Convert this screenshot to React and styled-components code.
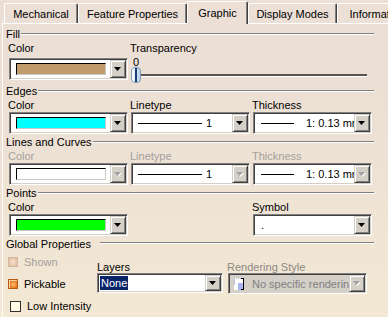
import React from "react";
import styled, { createGlobalStyle, css } from "styled-components";

const GlobalStyle = createGlobalStyle`
  html, body { margin: 0; padding: 0; }
  body {
    width: 388px;
    height: 317px;
    overflow: hidden;
    background: linear-gradient(180deg, #ebdfd6 0%, #ede1d5 45%, #f3e8d3 100%);
    font-family: "Liberation Sans", Arial, sans-serif;
    font-size: 11px;
    color: #000;
  }
`;

// Tabs
const TabBar = styled.div`
  display: flex;
  align-items: flex-end;
  height: 23px;
  padding-left: 4px;
`;

const Tab = styled.div`
  box-sizing: border-box;
  flex: none;
  width: ${(p) => p.$w}px;
  height: 20px;
  display: flex;
  align-items: center;
  justify-content: center;
  white-space: nowrap;
  overflow: hidden;
  border-top: 1px solid #fff;
  border-left: 1px solid #fff;
  border-right: 1px solid #404040;
  box-shadow: inset -1px 0 #808080;
  border-radius: 2px 2px 0 0;
  background: #ebdfd6;

  ${(p) =>
    p.$active &&
    css`
      height: 23px;
      margin-bottom: -1px;
      padding-bottom: 1px;
      position: relative;
      z-index: 1;
    `}
`;

// Panel
const Panel = styled.div`
  margin-left: 2px;
  border-top: 1px solid #fff;
  border-left: 1px solid #fff;
  padding: 4px 0 0 3px;
`;

const Section = styled.div`
  margin-bottom: 2px;
`;

const SectionTitle = styled.div`
  display: flex;
  align-items: center;
  width: 368px;
  height: 12px;
  line-height: 12px;
  white-space: nowrap;

  &::after {
    content: "";
    flex: 1;
    height: 0;
    border-top: 1px solid #808080;
    border-bottom: 1px solid #fff;
    margin-left: ${(p) => p.$lineGap || 1}px;
    ${(p) =>
      p.$lineHigh &&
      css`
        align-self: flex-start;
        margin-top: 4px;
      `}
  }
`;

const Row = styled.div`
  display: grid;
  grid-template-columns: repeat(3, 119px);
  column-gap: 3px;
  padding-left: 3px;
`;

const Field = styled.div`
  display: flex;
  flex-direction: column;
  grid-column: ${(p) => p.$col || "auto"};
`;

const Label = styled.div`
  box-sizing: border-box;
  height: 15px;
  padding-top: 2px;
  line-height: 13px;
  margin-left: -1px;
  white-space: nowrap;
  color: ${(p) => (p.$disabled ? "#a4a09c" : "#000")};
`;

// Combo box
const Combo = styled.div`
  box-sizing: border-box;
  width: ${(p) => (p.$w ? `${p.$w}px` : "100%")};
  height: ${(p) => p.$h || 22}px;
  margin-top: ${(p) => p.$mt || 0}px;
  display: flex;
  padding: 1px;
  border: 1px solid;
  border-color: #808080 #ffffff #ffffff #808080;
  box-shadow: inset 1px 1px #404040, inset -1px -1px #d4d0c8;
  background: ${(p) => (p.$disabled ? "#d4d0c8" : "#fff")};
`;

const ComboValue = styled.div`
  flex: 1;
  min-width: 0;
  display: flex;
  align-items: center;
  overflow: hidden;
  white-space: nowrap;
  color: ${(p) => (p.$disabled ? "#808080" : "#000")};
`;

const Swatch = styled.div`
  box-sizing: border-box;
  flex: 1;
  height: 12px;
  margin: 0 4px 0 5px;
  background: ${(p) => p.$color};
  border: 1px solid;
  border-color: #000 #c8c8c8 #c8c8c8 #000;
`;

const LineSample = styled.div`
  flex: none;
  width: ${(p) => p.$w}px;
  height: 1px;
  margin-left: ${(p) => p.$ml}px;
  background: ${(p) => (p.$disabled ? "#000" : "#000")};
`;

const ValueText = styled.span`
  margin-left: ${(p) => p.$ml || 0}px;
`;

const Selected = styled.span`
  margin-left: 1px;
  padding: 0 1px;
  line-height: 14px;
  background: #0a246a;
  color: #fff;
`;

const DropBtn = styled.div`
  box-sizing: border-box;
  flex: none;
  width: 16px;
  display: flex;
  align-items: center;
  justify-content: center;
  background: #d4d0c8;
  border: 1px solid;
  border-color: #d4d0c8 #404040 #404040 #d4d0c8;
  box-shadow: inset 1px 1px #fff, inset -1px -1px #808080;
`;

const Arrow = ({ disabled }) => (
  <svg width="8" height="5" viewBox="0 0 8 5">
    {disabled && <polygon points="1,1 8,1 4.5,5" fill="#fff" />}
    <polygon points="0,0 7,0 3.5,4" fill={disabled ? "#a0a0a0" : "#000"} />
  </svg>
);

const DropButton = ({ disabled }) => (
  <DropBtn>
    <Arrow disabled={disabled} />
  </DropBtn>
);

// Slider
const SliderBlock = styled.div`
  display: flex;
  flex-direction: column;
  height: 28px;
`;

const SliderValue = styled.div`
  margin-top: 2px;
  height: 11px;
  line-height: 11px;
  padding-left: 2px;
`;

const SliderTrackRow = styled.div`
  display: flex;
  align-items: center;
  height: 16px;
  margin-top: -1px;
  margin-right: 5px;
`;

const Thumb = styled.div`
  box-sizing: border-box;
  flex: none;
  width: 10px;
  height: 16px;
  border-radius: 4px;
  border: 1px solid #7f9db9;
  background: linear-gradient(90deg, #ffffff 0%, #e4eefa 35%, #b8cfea 100%);
  display: flex;
  justify-content: center;

  &::after {
    content: "";
    width: 2px;
    height: 100%;
    background: #1c3c78;
  }
`;

const Track = styled.div`
  flex: 1;
  height: 0;
  border-top: 2px solid #555;
  border-bottom: 1px solid #fff;
`;

// Global properties
const GlobalGrid = styled.div`
  display: grid;
  grid-template-columns: 91px 131px 139px;
`;

const CheckColumn = styled.div`
  display: flex;
  flex-direction: column;
  padding-top: 1px;
`;

const CheckRow = styled.div`
  display: flex;
  align-items: center;
  height: 22px;
  padding-left: ${(p) => p.$pl || 2}px;
  color: ${(p) => (p.$disabled ? "#a4a09c" : "#000")};
  white-space: nowrap;
`;

const boxStyles = {
  shown: css`
    width: 10px;
    height: 10px;
    border: 1px solid #d2b8a4;
    background: radial-gradient(circle at 50% 50%, #f6e2d2 0%, #e8c6aa 70%, #dcb698 100%);
  `,
  pickable: css`
    width: 10px;
    height: 10px;
    border: 1px solid #b85a14;
    background: radial-gradient(circle at 55% 55%, #ffc078 0%, #f08a30 45%, #c85e14 100%);
    box-shadow: inset 1px 1px #f8d0a8;
  `,
  plain: css`
    width: 11px;
    height: 11px;
    border: 1px solid #303030;
    background: #fffbe4;
  `,
};

const Box = styled.div`
  box-sizing: border-box;
  flex: none;
  margin-right: 6px;
  ${(p) => boxStyles[p.$kind]}
`;

const GlobalField = styled.div`
  display: flex;
  flex-direction: column;
  padding-top: 12px;
`;

const SmallLabel = styled.div`
  height: 11px;
  line-height: 11px;
  margin-left: ${(p) => p.$ml || 0}px;
  white-space: nowrap;
  color: ${(p) => (p.$disabled ? "#8c8884" : "#000")};
`;

const RenderIcon = () => (
  <svg width="11" height="12" viewBox="0 0 11 12" style={{ flex: "none", marginLeft: 4, marginRight: 7 }}>
    <rect x="0" y="0" width="10" height="12" fill="#fff" />
    <rect x="4" y="5" width="5" height="7" fill="#aab4ee" />
    <path d="M0 0h1M0 2h1M0 4h1M0 6h1M2 0h1M4 0h1M6 0h1" stroke="#8080c0" strokeWidth="1" />
    <path d="M9.5 0v12M7 0.5h3M7 11.5h3" stroke="#000" strokeWidth="1" />
  </svg>
);

const App = () => {
  return (
    <>
      <GlobalStyle />
      <TabBar>
        <Tab $w={74}>Mechanical</Tab>
        <Tab $w={109}>Feature Properties</Tab>
        <Tab $w={61} $active>
          Graphic
        </Tab>
        <Tab $w={89}>Display Modes</Tab>
        <Tab $w={80}>Information</Tab>
      </TabBar>

      <Panel>
        <Section>
          <SectionTitle>Fill</SectionTitle>
          <Row>
            <Field>
              <Label>Color</Label>
              <Combo $mt={3}>
                <ComboValue>
                  <Swatch $color="#c09b6c" />
                </ComboValue>
                <DropButton />
              </Combo>
            </Field>
            <Field $col="2 / span 2">
              <Label>Transparency</Label>
              <SliderBlock>
                <SliderValue>0</SliderValue>
                <SliderTrackRow>
                  <Thumb />
                  <Track />
                </SliderTrackRow>
              </SliderBlock>
            </Field>
          </Row>
        </Section>

        <Section>
          <SectionTitle>Edges</SectionTitle>
          <Row>
            <Field>
              <Label>Color</Label>
              <Combo>
                <ComboValue>
                  <Swatch $color="#00ffff" />
                </ComboValue>
                <DropButton />
              </Combo>
            </Field>
            <Field>
              <Label>Linetype</Label>
              <Combo>
                <ComboValue>
                  <LineSample $w={64} $ml={5} />
                  <ValueText $ml={4}>1</ValueText>
                </ComboValue>
                <DropButton />
              </Combo>
            </Field>
            <Field>
              <Label>Thickness</Label>
              <Combo>
                <ComboValue>
                  <LineSample $w={33} $ml={6} />
                  <ValueText $ml={12}>1: 0.13 mm</ValueText>
                </ComboValue>
                <DropButton />
              </Combo>
            </Field>
          </Row>
        </Section>

        <Section>
          <SectionTitle>Lines and Curves</SectionTitle>
          <Row>
            <Field>
              <Label $disabled>Color</Label>
              <Combo>
                <ComboValue>
                  <Swatch $color="#ffffff" />
                </ComboValue>
                <DropButton disabled />
              </Combo>
            </Field>
            <Field>
              <Label $disabled>Linetype</Label>
              <Combo>
                <ComboValue>
                  <LineSample $w={64} $ml={5} />
                  <ValueText $ml={4}>1</ValueText>
                </ComboValue>
                <DropButton disabled />
              </Combo>
            </Field>
            <Field>
              <Label $disabled>Thickness</Label>
              <Combo>
                <ComboValue>
                  <LineSample $w={33} $ml={6} />
                  <ValueText $ml={12}>1: 0.13 mm</ValueText>
                </ComboValue>
                <DropButton disabled />
              </Combo>
            </Field>
          </Row>
        </Section>

        <Section>
          <SectionTitle>Points</SectionTitle>
          <Row>
            <Field>
              <Label>Color</Label>
              <Combo>
                <ComboValue>
                  <Swatch $color="#00ff00" />
                </ComboValue>
                <DropButton />
              </Combo>
            </Field>
            <Field $col="3">
              <Label>Symbol</Label>
              <Combo>
                <ComboValue>
                  <ValueText $ml={6}>.</ValueText>
                </ComboValue>
                <DropButton />
              </Combo>
            </Field>
          </Row>
        </Section>

        <Section>
          <SectionTitle $lineGap={9} $lineHigh>
            Global Properties
          </SectionTitle>
          <GlobalGrid>
            <CheckColumn>
              <CheckRow $disabled>
                <Box $kind="shown" />
                Shown
              </CheckRow>
              <CheckRow>
                <Box $kind="pickable" />
                Pickable
              </CheckRow>
              <CheckRow $pl={4}>
                <Box $kind="plain" />
                Low Intensity
              </CheckRow>
            </CheckColumn>
            <GlobalField>
              <SmallLabel>Layers</SmallLabel>
              <Combo $w={126} $h={20}>
                <ComboValue>
                  <Selected>None</Selected>
                </ComboValue>
                <DropButton />
              </Combo>
            </GlobalField>
            <GlobalField>
              <SmallLabel $ml={-1} $disabled>
                Rendering Style
              </SmallLabel>
              <Combo $h={21} $disabled>
                <ComboValue $disabled>
                  <RenderIcon />
                  No specific rendering
                </ComboValue>
                <DropButton disabled />
              </Combo>
            </GlobalField>
          </GlobalGrid>
        </Section>
      </Panel>
    </>
  );
};

export default App;
